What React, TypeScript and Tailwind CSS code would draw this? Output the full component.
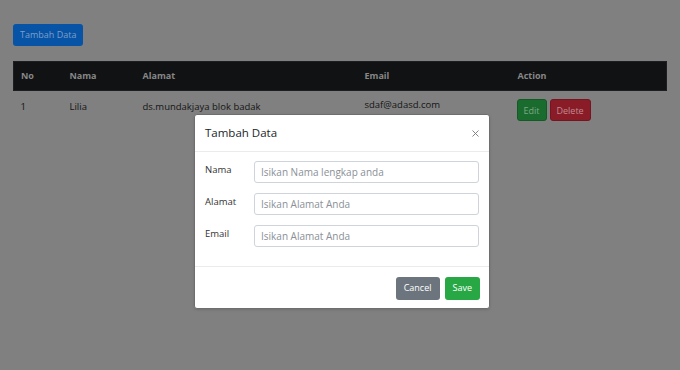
import { X } from 'lucide-react';

const rows = [{ no: 1, nama: 'Lilia', alamat: 'ds.mundakjaya blok badak', email: 'sdaf@adasd.com' }];

const fields = [
  { label: 'Nama', placeholder: 'Isikan Nama lengkap anda' },
  { label: 'Alamat', placeholder: 'Isikan Alamat Anda' },
  { label: 'Email', placeholder: 'Isikan Alamat Anda' },
];

export default function App() {
  return (
    <div className="relative h-[370px] w-[680px] overflow-hidden bg-[#808080] font-['Open_Sans',sans-serif] text-[9px] text-[#111]">
      <div className="px-[13px] pt-[24px]">
        <button className="h-[22px] rounded-[3px] bg-[#0753a5] px-[7px] text-[9px] text-[#7d9fc9]">
          Tambah Data
        </button>

        <table className="mt-[15px] w-full border-collapse text-left">
          <thead>
            <tr className="h-[29px] border border-[#1c1e21] bg-[#111214] text-[9px] font-bold text-[#878787]">
              <th className="w-[56px] pl-[7px]">No</th>
              <th className="w-[73px]">Nama</th>
              <th className="w-[222px]">Alamat</th>
              <th className="w-[153px]">Email</th>
              <th>Action</th>
            </tr>
          </thead>
          <tbody>
            {rows.map((r) => (
              <tr key={r.no} className="h-[32px] align-middle text-[9.5px] text-[#141414]">
                <td className="pl-[7px]">{r.no}</td>
                <td>{r.nama}</td>
                <td>{r.alamat}</td>
                <td className="align-top pt-[7px]">{r.email}</td>
                <td className="pt-[7px]">
                  <div className="-ml-[1px] flex gap-[3px] text-[9px]">
                    <button className="h-[22px] rounded-[3px] border border-[#145a24] bg-[#1a6b2e] px-[6px] text-[#7ea689]">
                      Edit
                    </button>
                    <button className="h-[22px] rounded-[3px] border border-[#751520] bg-[#8a1c28] px-[6px] text-[#c18b91]">
                      Delete
                    </button>
                  </div>
                </td>
              </tr>
            ))}
          </tbody>
        </table>
      </div>

      {/* modal */}
      <div className="absolute left-[194px] top-[114px] w-[296px] rounded-[3px] border border-[#6e6e6e] bg-white shadow-sm">
        <div className="flex h-[37px] items-center justify-between border-b border-[#e9ecef] px-[10px]">
          <h5 className="text-[11.5px] text-[#212529]">Tambah Data</h5>
          <X size={11} strokeWidth={2} className="-mr-[2px] text-[#7a7a7a]" />
        </div>
        <div className="flex flex-col gap-[10px] px-[10px] pb-[19px] pt-[9px]">
          {fields.map((f) => (
            <div key={f.label} className="flex items-center">
              <label className="w-[49px] pb-[4px] text-[9.5px] text-[#333]">{f.label}</label>
              <input
                placeholder={f.placeholder}
                className="h-[22px] flex-1 rounded-[3px] border border-[#ced4da] px-[6px] text-[10px] outline-none placeholder:text-[#8a9096]"
              />
            </div>
          ))}
        </div>
        <div className="flex h-[42px] items-center justify-end gap-[5px] border-t border-[#e9ecef] px-[9px] pt-[1px]">
          <button className="h-[23px] rounded-[3px] bg-[#6c757d] px-[8px] text-[9px] text-white">Cancel</button>
          <button className="h-[23px] rounded-[3px] bg-[#28a745] px-[8px] text-[9px] text-white">Save</button>
        </div>
      </div>
    </div>
  );
}
